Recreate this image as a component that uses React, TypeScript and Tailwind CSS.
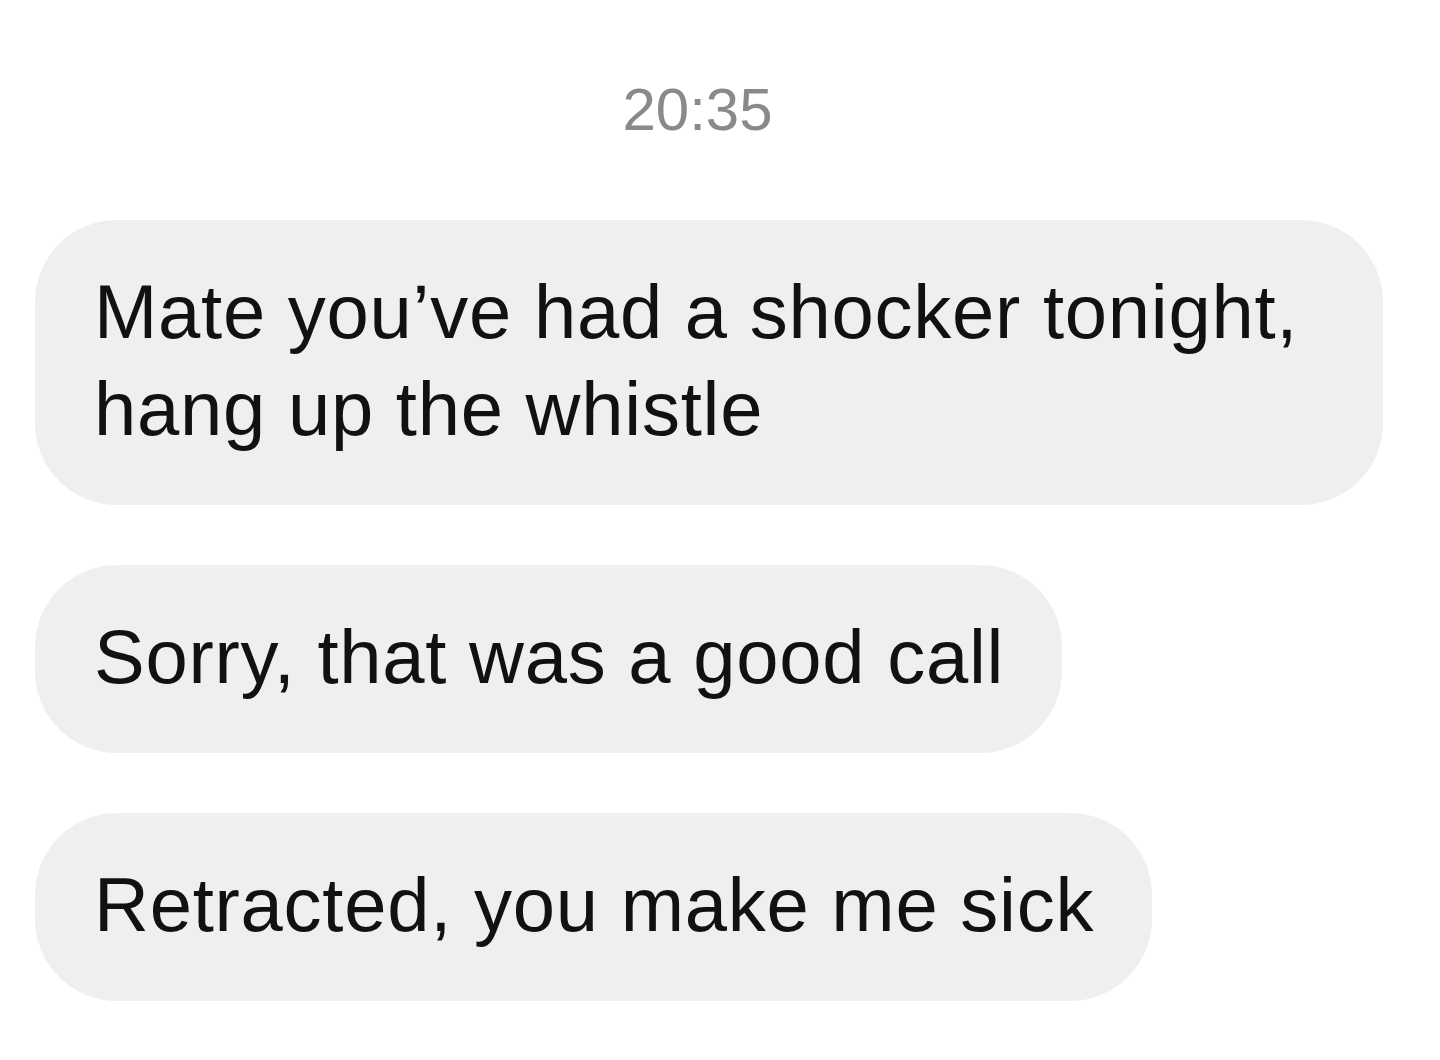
import React from "react";

const font = { fontFamily: '"Liberation Sans", Arial, sans-serif' };

function Bubble({ children, className = "" }: { children: React.ReactNode; className?: string }) {
  return (
    <div
      className={`self-start bg-[#efefef] rounded-[82px] pl-[59px] pr-[58px] pt-[43px] pb-[48px] text-[76px] leading-[97px] tracking-[0.75px] text-[#111111] ${className}`}
      style={font}
    >
      {children}
    </div>
  );
}

export default function App() {
  return (
    <div className="w-[1440px] h-[1060px] bg-white overflow-hidden" style={font}>
      <div className="flex flex-col pl-[35px] pt-[80px]">
        <div className="self-stretch pr-[80px] text-center text-[60px] leading-[60px] text-[#8a8a8a] mb-[80px]" style={font}>
          20:35
        </div>
        <div className="flex flex-col gap-[60px]">
          <Bubble className="w-[1348px]">
            Mate you’ve had a shocker tonight, hang up the whistle
          </Bubble>
          <Bubble>Sorry, that was a good call</Bubble>
          <Bubble>Retracted, you make me sick</Bubble>
        </div>
      </div>
    </div>
  );
}
